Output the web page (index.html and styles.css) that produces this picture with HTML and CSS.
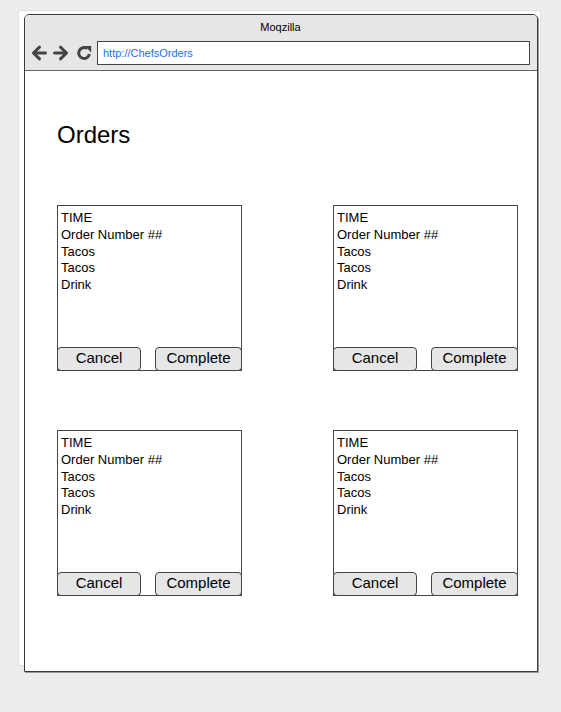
FILE: index.html
```html
<!DOCTYPE html>
<html lang="en">
<head>
  <meta charset="UTF-8">
  <title>Chefs Orders</title>
  <meta name="viewport" content="width=device-width, initial-scale=1.0">
  <link rel="stylesheet" href="styles.css">
</head>
<body>
  <div class="sheet">
    <div class="window">
      <div class="titlebar">
        <div class="title">Moqzilla</div>
        <div class="nav-row">
          <svg class="nav-icon back" width="16" height="16" viewBox="0 0 16 16">
            <path d="M14.5 8H3" stroke="#444" stroke-width="3" fill="none" stroke-linecap="round"/>
            <path d="M8.5 2.2L2.5 8l6 5.8" stroke="#444" stroke-width="3" fill="none" stroke-linecap="round" stroke-linejoin="round"/>
          </svg>
          <svg class="nav-icon forward" width="16" height="16" viewBox="0 0 16 16">
            <path d="M1.5 8H13" stroke="#444" stroke-width="3" fill="none" stroke-linecap="round"/>
            <path d="M7.5 2.2L13.5 8l-6 5.8" stroke="#444" stroke-width="3" fill="none" stroke-linecap="round" stroke-linejoin="round"/>
          </svg>
          <svg class="nav-icon reload" width="16" height="16" viewBox="0 0 16 16">
            <path d="M13.4 9A5.4 5.4 0 1 1 11.2 3.6" stroke="#444" stroke-width="3" fill="none"/>
            <path d="M8.8 1h6.4v6.4z" fill="#444"/>
          </svg>
          <div class="url">http://ChefsOrders</div>
        </div>
      </div>

      <div class="content">
        <h1>Orders</h1>
        <div class="orders">
          <div class="card">
            <div class="lines">
              TIME<br>Order Number ##<br>Tacos<br>Tacos<br>Drink
            </div>
            <div class="actions">
              <button class="btn cancel">Cancel</button>
              <button class="btn complete">Complete</button>
            </div>
          </div>
          <div class="card">
            <div class="lines">
              TIME<br>Order Number ##<br>Tacos<br>Tacos<br>Drink
            </div>
            <div class="actions">
              <button class="btn cancel">Cancel</button>
              <button class="btn complete">Complete</button>
            </div>
          </div>
          <div class="card">
            <div class="lines">
              TIME<br>Order Number ##<br>Tacos<br>Tacos<br>Drink
            </div>
            <div class="actions">
              <button class="btn cancel">Cancel</button>
              <button class="btn complete">Complete</button>
            </div>
          </div>
          <div class="card">
            <div class="lines">
              TIME<br>Order Number ##<br>Tacos<br>Tacos<br>Drink
            </div>
            <div class="actions">
              <button class="btn cancel">Cancel</button>
              <button class="btn complete">Complete</button>
            </div>
          </div>
        </div>
      </div>
    </div>
  </div>
</body>
</html>
```

FILE: styles.css
```css
html, body {
  margin: 0;
  background-color: #ededed;
}
body {
  box-sizing: border-box;
  min-height: 712px;
  padding-top: 10px;
  font-family: "Liberation Sans", Arial, sans-serif;
  color: #000;
}
.sheet {
  width: 521px;
  height: 654px;
  margin-left: 18px;
  background-color: #fff;
  border: 1px solid #e0e0e0;
}
.window {
  width: 512px;
  height: 656px;
  margin: 3px 0 0 5px;
  border: 1px solid #3a3a3a;
  border-radius: 5px 5px 0 0;
  box-shadow: 1px 1px 0 #999;
  background-color: #fff;
}
.titlebar {
  background-color: #e6e6e6;
  border-bottom: 1px solid #666;
  border-radius: 4px 4px 0 0;
  padding: 6px 7px 5px 6px;
}
.title {
  font-size: 11px;
  line-height: 13px;
  text-align: center;
}
.nav-row {
  display: flex;
  align-items: center;
  margin-top: 7px;
}
.nav-icon {
  display: block;
  flex: none;
}
.forward { margin-left: 6px; }
.reload { margin-left: 7px; }
.url {
  flex: 1;
  margin-left: 5px;
  height: 22px;
  line-height: 22px;
  padding: 0 5px;
  background-color: #fff;
  border: 1px solid #444;
  font-size: 11px;
  color: #1f6fe8;
}
.content {
  padding: 50px 0 0 32px;
}
h1 {
  margin: 0;
  font-size: 24px;
  line-height: 28px;
  font-weight: normal;
}
.orders {
  display: grid;
  grid-template-columns: 185px 185px;
  column-gap: 91px;
  row-gap: 59px;
  margin-top: 56px;
}
.card {
  box-sizing: border-box;
  height: 166px;
  border: 1px solid #444;
  display: flex;
  flex-direction: column;
}
.lines {
  padding: 4px 3px 3px;
  font-size: 13px;
  line-height: 16.8px;
}
.actions {
  margin: auto -1px -1px;
  display: flex;
  justify-content: space-between;
}
.btn {
  box-sizing: border-box;
  height: 24px;
  padding: 0 0 3px;
  background-color: #e6e6e6;
  border: 1px solid #444;
  border-radius: 4px;
  font-family: "Liberation Sans", Arial, sans-serif;
  font-size: 15px;
  color: #000;
}
.cancel { width: 84px; }
.complete { width: 87px; }
```
